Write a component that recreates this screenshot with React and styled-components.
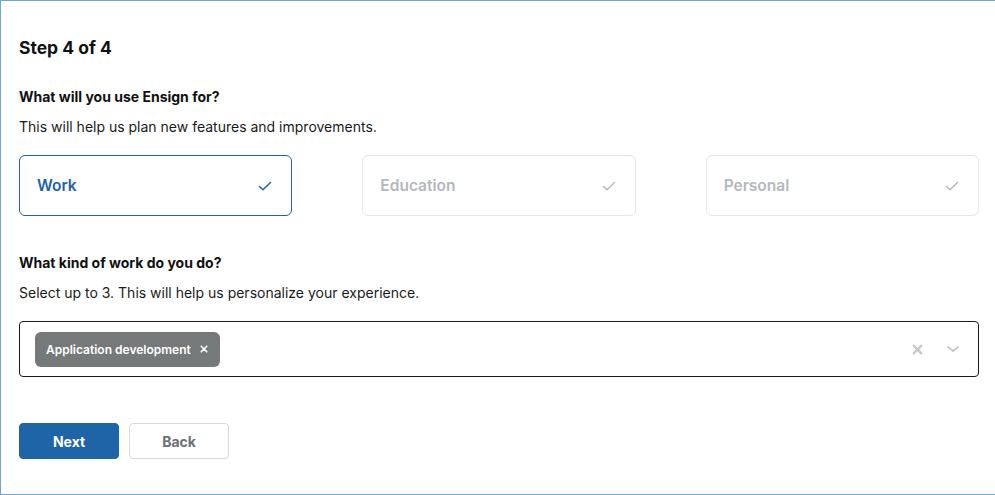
import styled, { createGlobalStyle } from "styled-components";

const GlobalStyle = createGlobalStyle`
  * { box-sizing: border-box; }
  body {
    margin: 0;
    font-family: Inter, "Noto Sans", sans-serif;
    color: #111;
    background: #fff;
  }
`;

const Frame = styled.div`
  height: 495px;
  border: 1px solid #70a5cc;
  border-right: none;
  padding: 36px 16px 0 18px;
`;

const Title = styled.h1`
  margin: 0 0 29px;
  font-size: 17.5px;
  font-weight: 700;
  line-height: 22px;
`;

const Question = styled.h2`
  margin: 0 0 12px;
  font-size: 14px;
  font-weight: 700;
  line-height: 18px;
`;

const Hint = styled.p`
  margin: 0 0 19px;
  font-size: 14px;
  line-height: 18px;
  color: #1a1a1a;
`;

const Cards = styled.div`
  display: grid;
  grid-template-columns: repeat(3, 1fr);
  column-gap: 70px;
  margin-bottom: 38px;
`;

const Card = styled.div`
  height: 61px;
  display: flex;
  align-items: center;
  justify-content: space-between;
  padding: 0 18px 0 17px;
  border-radius: 6px;
  border: 1px solid ${(p) => (p.$active ? "#2163a3" : "#e6e7e9")};
  color: ${(p) => (p.$active ? "#2163a3" : "#b4b8bd")};
  font-size: 15.5px;
  font-weight: 600;
`;

const Select = styled.div`
  height: 56px;
  margin-top: 2px;
  display: flex;
  align-items: center;
  justify-content: space-between;
  padding: 0 17px 0 15px;
  border: 1px solid #1a1a1a;
  border-radius: 4px;
  margin-bottom: 46px;
`;

const Tag = styled.div`
  height: 35px;
  display: flex;
  align-items: center;
  gap: 9px;
  padding: 0 12px 0 11px;
  background: #767979;
  border-radius: 6px;
  color: #fff;
  font-size: 12px;
  font-weight: 600;
`;

const Controls = styled.div`
  display: flex;
  align-items: center;
  gap: 22px;
  color: #c7c7c7;
`;

const Actions = styled.div`
  display: flex;
  gap: 10px;
`;

const Button = styled.button`
  width: 100px;
  height: 36px;
  border-radius: 4px;
  font-family: inherit;
  font-size: 14px;
  font-weight: 700;
  cursor: pointer;
  border: 1px solid ${(p) => (p.$primary ? "#1f64a7" : "#d5d7da")};
  background: ${(p) => (p.$primary ? "#1f64a7" : "#fff")};
  color: ${(p) => (p.$primary ? "#fff" : "#6b7078")};
`;

const Check = () => (
  <svg width="16" height="16" viewBox="0 0 16 16" fill="none">
    <path d="M2.5 8.5l3.5 3.2 7.5-7.2" stroke="currentColor" strokeWidth="1.5" strokeLinecap="round" strokeLinejoin="round" />
  </svg>
);

const Cross = ({ size = 10, width = 2 }) => (
  <svg width={size} height={size} viewBox="0 0 10 10" fill="none">
    <path d="M1.5 1.5l7 7M8.5 1.5l-7 7" stroke="currentColor" strokeWidth={width} strokeLinecap="round" />
  </svg>
);

const Chevron = () => (
  <svg width="16" height="16" viewBox="0 0 16 16" fill="none">
    <path d="M3 6l5 4 5-4" stroke="currentColor" strokeWidth="1.8" strokeLinecap="round" strokeLinejoin="round" />
  </svg>
);

const uses = ["Work", "Education", "Personal"];

const App = () => {
  return (
    <Frame>
      <GlobalStyle />
      <Title>Step 4 of 4</Title>
      <Question>What will you use Ensign for?</Question>
      <Hint>This will help us plan new features and improvements.</Hint>
      <Cards>
        {uses.map((u) => (
          <Card key={u} $active={u === "Work"}>
            {u}
            <Check />
          </Card>
        ))}
      </Cards>
      <Question>What kind of work do you do?</Question>
      <Hint>Select up to 3. This will help us personalize your experience.</Hint>
      <Select>
        <Tag>
          Application development
          <Cross size={8} width={2} />
        </Tag>
        <Controls>
          <Cross size={11} width={2} />
          <Chevron />
        </Controls>
      </Select>
      <Actions>
        <Button $primary>Next</Button>
        <Button>Back</Button>
      </Actions>
    </Frame>
  );
};

export default App;
